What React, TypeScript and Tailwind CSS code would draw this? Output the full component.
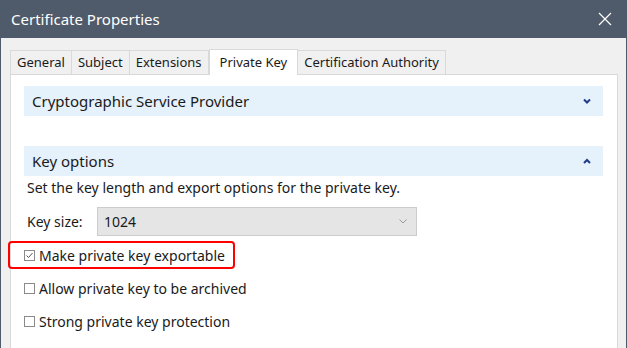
import React from "react";

const font = { fontFamily: '"Noto Sans", "Open Sans", sans-serif' };

function Check({ checked }: { checked?: boolean }) {
  return (
    <span className="w-[11px] h-[11px] border border-[#8a8a8a] bg-white flex items-center justify-center shrink-0">
      {checked && (
        <svg width="9" height="9" viewBox="0 0 9 9">
          <path d="M1.5 4.5 L3.5 6.5 L7.5 2" fill="none" stroke="#555" strokeWidth="1" />
        </svg>
      )}
    </span>
  );
}

function Band({ title, up }: { title: string; up?: boolean }) {
  return (
    <div className="h-[30px] bg-[#e5f1fb] flex items-center justify-between pl-[8px] pr-[12px] text-[15px] text-[#1a1a1a]">
      <span>{title}</span>
      <svg width="8" height="6" viewBox="0 0 8 6">
        {up ? (
          <path d="M1 5 L4 2 L7 5" fill="none" stroke="#1f3b8a" strokeWidth="2" />
        ) : (
          <path d="M1 1.5 L4 4.5 L7 1.5" fill="none" stroke="#1f3b8a" strokeWidth="2" />
        )}
      </svg>
    </div>
  );
}

const tabs = ["General", "Subject", "Extensions", "Private Key", "Certification Authority"];

export default function App() {
  return (
    <div className="w-[627px] h-[348px] overflow-hidden bg-[#f0f0f0] border-x border-[#4f5b6a] flex flex-col" style={font}>
      <div className="h-[38px] shrink-0 bg-[#4f5b6a] flex items-center justify-between pl-[10px] pr-[14px] text-white text-[15px]">
        <span>Certificate Properties</span>
        <svg width="14" height="14" viewBox="0 0 14 14">
          <path d="M1 1 L13 13 M13 1 L1 13" stroke="#fff" strokeWidth="1.2" />
        </svg>
      </div>
      <div className="flex-1 flex flex-col pl-[9px] pr-[8px] pt-[10px]">
        <div className="flex items-end h-[26px] text-[13px] text-[#1a1a1a]">
          {tabs.map((t) => {
            const active = t === "Private Key";
            return (
              <div
                key={t}
                className={
                  active
                    ? "h-[26px] bg-white border border-b-0 border-[#d9d9d9] px-[10px] flex items-center -mb-px relative z-10"
                    : "h-[24px] bg-[#f0f0f0] border border-b-0 border-[#d9d9d9] -ml-px first:ml-0 px-[6px] flex items-center"
                }
              >
                {t}
              </div>
            );
          })}
        </div>
        <div className="flex-1 bg-white border border-b-0 border-[#d9d9d9] pl-[13px] pr-[14px] pt-[11px] text-[14px] text-[#1a1a1a]">
          <Band title="Cryptographic Service Provider" />
          <div className="h-[30px]" />
          <Band title="Key options" up />
          <div className="pl-[3px] pt-[2px] leading-[20px]">Set the key length and export options for the private key.</div>
          <div className="flex items-center mt-[9px] pl-[3px]">
            <span className="w-[70px]">Key size:</span>
            <div className="w-[320px] h-[29px] bg-[#e5e5e5] border border-[#cccccc] flex items-center justify-between pl-[6px] pr-[9px]">
              <span>1024</span>
              <svg width="8" height="5" viewBox="0 0 8 5">
                <path d="M0.5 0.5 L4 4 L7.5 0.5" fill="none" stroke="#999" strokeWidth="1" />
              </svg>
            </div>
          </div>
          <div className="mt-[5px] -ml-[16px] w-[227px] h-[28px] border-2 border-[#ff0000] rounded-[4px] flex items-center gap-[4px] pl-[14px]">
            <Check checked />
            <span>Make private key exportable</span>
          </div>
          <div className="flex items-center gap-[4px] mt-[9px] h-[20px]">
            <Check />
            <span>Allow private key to be archived</span>
          </div>
          <div className="flex items-center gap-[4px] mt-[13px] h-[20px]">
            <Check />
            <span>Strong private key protection</span>
          </div>
        </div>
      </div>
    </div>
  );
}
